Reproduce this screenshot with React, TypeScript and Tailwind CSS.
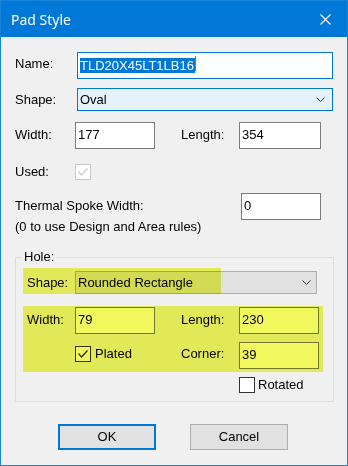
import React from "react";

const font = { fontFamily: '"Liberation Sans", Arial, sans-serif' };

function Box({ w, text, className = "" }: { w: string; text: string; className?: string }) {
  return (
    <div className={`h-[27px] ${w} border border-[#7a7a7a] bg-white pl-[2px] pt-[4px] leading-[15px] ${className}`}>
      {text}
    </div>
  );
}

function Check({ checked, disabled }: { checked: boolean; disabled?: boolean }) {
  const col = disabled ? "#cccccc" : "#333333";
  return (
    <div
      className={`w-[16px] h-[16px] border bg-white flex items-center justify-center ${
        disabled ? "border-[#cccccc]" : "border-[#333333]"
      }`}
    >
      {checked && (
        <svg width="12" height="10" viewBox="0 0 12 10">
          <path d="M1.5 4.5 L4.5 8 L10.5 1.5" fill="none" stroke={col} strokeWidth="1.3" />
        </svg>
      )}
    </div>
  );
}

function Chevron() {
  return (
    <svg width="9" height="5" viewBox="0 0 9 5">
      <path d="M0.5 0.5 L4.5 4.5 L8.5 0.5" fill="none" stroke="#333" strokeWidth="1" />
    </svg>
  );
}

export default function App() {
  return (
    <div style={font} className="w-[348px] h-[466px] border border-[#1883d7] bg-[#f0f0f0] flex flex-col text-[13px] text-black overflow-hidden">
      {/* Title bar */}
      <div className="h-[36px] shrink-0 bg-[#0078d7] flex items-center justify-between pl-[10px] pr-[16px]">
        <span style={{ fontFamily: '"Noto Sans", "Open Sans", sans-serif' }} className="text-white text-[14px] leading-none mt-[1px]">
          Pad Style
        </span>
        <svg width="11" height="11" viewBox="0 0 11 11" className="mt-[1px]">
          <path d="M0.5 0.5 L10.5 10.5 M10.5 0.5 L0.5 10.5" stroke="white" strokeWidth="1.1" />
        </svg>
      </div>

      {/* Body */}
      <div className="flex flex-col pl-[14px]">
        {/* Name */}
        <div className="flex items-center h-[27px] mt-[15px]">
          <span className="w-[62px] -mt-[3px]">Name:</span>
          <div className="h-[27px] w-[256px] border border-[#0078d7] bg-white pl-[2px] pt-[3px]">
            <span className="bg-[#0078d7] text-white leading-[15px] inline-block pr-[1px]">TLD20X45LT1LB16</span>
            <span className="inline-block w-[1px] h-[15px] bg-[#c86400] align-top"></span>
          </div>
        </div>

        {/* Shape */}
        <div className="flex items-center h-[23px] mt-[9px]">
          <span className="w-[62px]">Shape:</span>
          <div className="h-[23px] w-[256px] border border-[#0078d7] bg-[#e5f1fb] flex items-center justify-between pl-[2px] pr-[7px]">
            <span>Oval</span>
            <Chevron />
          </div>
        </div>

        {/* Width / Length */}
        <div className="flex items-center h-[27px] mt-[11px]">
          <span className="w-[60px] -mt-[2px]">Width:</span>
          <Box w="w-[80px]" text="177" />
          <span className="ml-[26px] w-[58px] -mt-[2px]">Length:</span>
          <Box w="w-[82px]" text="354" />
        </div>

        {/* Used */}
        <div className="flex items-center h-[16px] mt-[15px]">
          <span className="w-[60px]">Used:</span>
          <Check checked disabled />
        </div>

        {/* Thermal */}
        <div className="flex items-start mt-[13px]">
          <div className="w-[226px] pt-[2px] leading-[21px]">
            <div>Thermal Spoke Width:</div>
            <div>(0 to use Design and Area rules)</div>
          </div>
          <Box w="w-[80px]" text="0" />
        </div>

        {/* Hole group */}
        <fieldset className="w-[319px] border border-[#dcdcdc] mt-[12px] pb-[8px]">
          <legend className="ml-[6px] px-[2px] leading-[16px]">Hole:</legend>

          {/* Hole shape row */}
          <div className="relative ml-[7px] w-[300px] h-[26px] mt-[3px] flex items-end">
            <span className="absolute left-[4px] top-[5px]">Shape:</span>
            <div className="ml-[52px] h-[23px] w-[242px] border border-[#adadad] bg-[#e1e1e1] flex items-center justify-between pl-[2px] pr-[5px]">
              <span>Rounded Rectangle</span>
              <Chevron />
            </div>
            <div className="absolute left-0 top-0 w-[198px] h-[26px] bg-[#f0f85e] mix-blend-multiply pointer-events-none"></div>
          </div>

          {/* Dimensions block */}
          <div className="relative ml-[7px] w-[300px] mt-[12px] pt-[1px] pb-[3px] flex flex-col">
            <div className="flex items-center h-[27px]">
              <span className="w-[52px] pl-[4px] -mt-[2px]">Width:</span>
              <Box w="w-[80px]" text="79" />
              <span className="ml-[26px] w-[58px] -mt-[2px]">Length:</span>
              <Box w="w-[80px]" text="230" />
            </div>
            <div className="flex items-center h-[27px] mt-[8px]">
              <div className="ml-[52px] w-[80px] flex items-center -mt-[3px]">
                <Check checked />
                <span className="ml-[4px]">Plated</span>
              </div>
              <span className="ml-[26px] w-[58px] -mt-[3px]">Corner:</span>
              <Box w="w-[80px]" text="39" />
            </div>
            <div className="absolute inset-0 bg-[#f0f85e] mix-blend-multiply pointer-events-none"></div>
          </div>

          {/* Rotated */}
          <div className="flex items-center h-[16px] mt-[5px] ml-[223px]">
            <Check checked={false} />
            <span className="ml-[3px]">Rotated</span>
          </div>
        </fieldset>

        {/* Buttons */}
        <div className="flex mt-[22px] ml-[43px]">
          <div className="w-[98px] h-[26px] border-2 border-[#0078d7] bg-[#e1e1e1] flex items-center justify-center">
            OK
          </div>
          <div className="ml-[34px] w-[98px] h-[26px] border border-[#adadad] bg-[#e1e1e1] flex items-center justify-center">
            Cancel
          </div>
        </div>
      </div>
    </div>
  );
}
